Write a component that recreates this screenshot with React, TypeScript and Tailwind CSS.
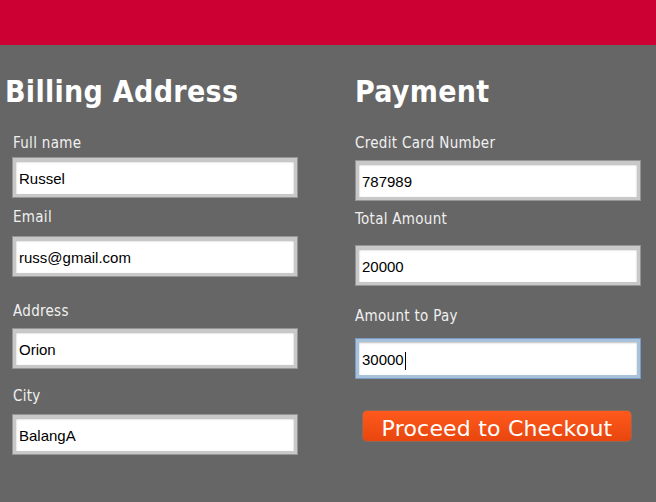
import React from "react";

const labelCls =
  "text-[15px] leading-[17px] tracking-[0.3px] text-[#f0f0f0] font-['DejaVu_Sans_Condensed','DejaVu_Sans',sans-serif]";

function Field({
  value,
  focused = false,
}: {
  value: string;
  focused?: boolean;
}) {
  return (
    <div
      className={
        "w-[284px] h-[39px] bg-white flex items-center pl-[3px] pt-[4px] border-[3px] font-['Liberation_Sans',Arial,sans-serif] text-[15px] text-black " +
        (focused
          ? "border-[#a9c2dc] shadow-[0_0_0_1px_#7a9cc4,inset_0_1px_2px_rgba(0,0,0,0.25)]"
          : "border-[#c8c8c8] shadow-[0_0_0_1px_#959595,inset_0_1px_2px_rgba(0,0,0,0.3)]")
      }
    >
      <span>{value}</span>
      {focused && <span className="inline-block w-px h-[18px] bg-black ml-px" />}
    </div>
  );
}

const headCls =
  "mt-[29px] text-[30px] leading-[35px] font-bold text-white font-['DejaVu_Sans_Condensed','DejaVu_Sans',sans-serif] tracking-[0.3px]";

export default function App() {
  return (
    <div className="min-h-screen bg-[#666666] font-['DejaVu_Sans',sans-serif]">
      <div className="h-[45px] bg-[#cc0033]" />
      <div className="flex">
        {/* Billing */}
        <div className="w-[350px] pl-[5px]">
          <h2 className={headCls}>Billing Address</h2>
          <div className="pl-[8px]">
            <div className={labelCls + " mt-[26px]"}>Full name</div>
            <div className="mt-[6px]">
              <Field value="Russel" />
            </div>
            <div className={labelCls + " mt-[12px]"}>Email</div>
            <div className="mt-[11px]">
              <Field value="russ@gmail.com" />
            </div>
            <div className={labelCls + " mt-[27px]"}>Address</div>
            <div className="mt-[9px]">
              <Field value="Orion" />
            </div>
            <div className={labelCls + " mt-[20px]"}>City</div>
            <div className="mt-[10px]">
              <Field value="BalangA" />
            </div>
          </div>
        </div>
        {/* Payment */}
        <div className="pl-[5px]">
          <h2 className={headCls}>Payment</h2>
          <div className="pl-px">
            <div className={labelCls + " mt-[26px] -ml-px"}>Credit Card Number</div>
            <div className="mt-[9px]">
              <Field value="787989" />
            </div>
            <div className={labelCls + " mt-[11px] -ml-px"}>Total Amount</div>
            <div className="mt-[18px]">
              <Field value="20000" />
            </div>
            <div className={labelCls + " mt-[23px] -ml-px"}>Amount to Pay</div>
            <div className="mt-[14px]">
              <Field value="30000" focused />
            </div>
            <button className="mt-[32px] ml-[6px] w-[270px] h-[32px] rounded-[5px] border border-[#8a6a5a] bg-gradient-to-b from-[#ff5a1c] to-[#e8460e] text-white text-[22px] leading-[30px] pt-[3px] font-['DejaVu_Sans',sans-serif] tracking-[0.2px]">
              Proceed to Checkout
            </button>
          </div>
        </div>
      </div>
    </div>
  );
}
